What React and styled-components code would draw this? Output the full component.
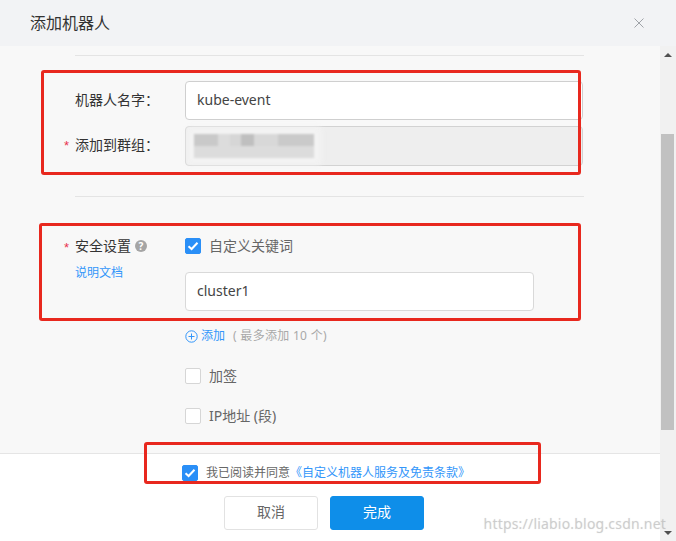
import React from 'react';
import styled, { createGlobalStyle } from 'styled-components';

const CJK = `"Noto Sans", "Noto Sans CJK SC", sans-serif`;

const GlobalStyle = createGlobalStyle`
  html, body {
    margin: 0;
    padding: 0;
    background: #fff;
  }
  * {
    box-sizing: border-box;
  }
`;

const CheckIcon = () => (
  <svg width="12" height="10" viewBox="0 0 12 10" fill="none">
    <path d="M1.5 5.2 L4.6 8 L10.5 1.8" stroke="#fff" strokeWidth="2" />
  </svg>
);

const CheckField = ({ checked, children }) => (
  <CheckRow>
    <CheckBox $checked={checked}>{checked && <CheckIcon />}</CheckBox>
    <CheckLabel>{children}</CheckLabel>
  </CheckRow>
);

const App = () => {
  return (
    <Page>
      <GlobalStyle />
      <Header>
        <Title>添加机器人</Title>
        <CloseButton>
          <svg width="10" height="10" viewBox="0 0 10 10" fill="none">
            <path d="M0.5 0.5 L9.5 9.5 M9.5 0.5 L0.5 9.5" stroke="#a0a3a8" strokeWidth="1" />
          </svg>
        </CloseButton>
      </Header>
      <Main>
        <Column>
          <Body>
            <Divider />
            <NameRow>
              <Label>机器人名字：</Label>
              <Input value="kube-event" readOnly />
            </NameRow>
            <GroupRow>
              <Label $required>添加到群组：</Label>
              <DisabledInput>
                <Blur />
              </DisabledInput>
            </GroupRow>
            <SecondDivider />
            <SecurityRow>
              <LabelColumn>
                <SecurityLabel>
                  <Star>*</Star>安全设置
                  <HelpIcon>?</HelpIcon>
                </SecurityLabel>
                <DocLink>说明文档</DocLink>
              </LabelColumn>
              <Options>
                <CheckField checked>自定义关键词</CheckField>
                <KeywordInput value="cluster1" readOnly />
                <AddRow>
                  <svg width="13" height="13" viewBox="0 0 13 13" fill="none">
                    <circle cx="6.5" cy="6.5" r="5.7" stroke="#3296fa" strokeWidth="1" />
                    <path d="M6.5 3.5 V9.5 M3.5 6.5 H9.5" stroke="#3296fa" strokeWidth="1" />
                  </svg>
                  <AddLink>添加</AddLink>
                  <AddHint>( 最多添加 10 个)</AddHint>
                </AddRow>
                <SignOption>
                  <CheckField>加签</CheckField>
                </SignOption>
                <IpOption>
                  <CheckField>IP地址 (段)</CheckField>
                </IpOption>
              </Options>
            </SecurityRow>
          </Body>
          <Footer>
            <Agreement>
              <CheckBox $checked>
                <CheckIcon />
              </CheckBox>
              <AgreeText>我已阅读并同意</AgreeText>
              <AgreeLink>《自定义机器人服务及免责条款》</AgreeLink>
            </Agreement>
            <Buttons>
              <CancelButton>取消</CancelButton>
              <DoneButton>完成</DoneButton>
            </Buttons>
          </Footer>
        </Column>
        <Scrollbar>
          <Arrow />
          <Track>
            <Thumb />
          </Track>
          <Arrow $down />
        </Scrollbar>
      </Main>
      <Mark $top={70} $left={41} $width={540} $height={105} />
      <Mark $top={223} $left={39} $width={542} $height={98} />
      <Mark $top={442} $left={144} $width={397} $height={42} />
      <Watermark>https://liabio.blog.csdn.net</Watermark>
    </Page>
  );
};

const Page = styled.div`
  position: relative;
  display: flex;
  flex-direction: column;
  width: 676px;
  height: 541px;
  overflow: hidden;
  font-family: ${CJK};
  font-size: 14px;
  line-height: 16px;
  color: #333;
`;

const Header = styled.header`
  display: flex;
  align-items: center;
  justify-content: space-between;
  flex: 0 0 46px;
  padding: 0 32px 0 30px;
  background: #f2f3f5;
`;

const Title = styled.h1`
  margin: 0 0 1px;
  font-size: 16px;
  font-weight: 400;
  color: #333;
`;

const CloseButton = styled.span`
  display: flex;
  margin-bottom: 1px;
`;

const Main = styled.div`
  display: flex;
  flex: 1;
  min-height: 0;
`;

const Column = styled.div`
  display: flex;
  flex-direction: column;
  flex: 1;
  min-width: 0;
`;

const Body = styled.div`
  flex: 0 0 408px;
  padding: 9px 76px 0 75px;
  background: #f8f8f8;
  border-bottom: 1px solid #e5e5e5;
  overflow: hidden;
`;

const Divider = styled.div`
  height: 1px;
  background: #e4e4e4;
`;

const SecondDivider = styled(Divider)`
  margin-top: 30px;
`;

const NameRow = styled.div`
  display: flex;
  align-items: center;
  margin-top: 25px;
`;

const GroupRow = styled(NameRow)`
  margin-top: 6px;
`;

const Label = styled.label`
  position: relative;
  flex: 0 0 110px;
  margin-top: -2px;
  font-size: 14px;
  color: #333;
  ${(p) =>
    p.$required &&
    `
    &::before {
      content: '*';
      position: absolute;
      left: -11px;
      top: 1px;
      font-family: "Liberation Sans", sans-serif;
      font-size: 13px;
      color: #e8324f;
    }
  `}
`;

const Input = styled.input`
  width: 398px;
  height: 39px;
  padding: 0 11px 3px;
  border: 1px solid #cfcfcf;
  border-radius: 4px;
  background: #fff;
  font-family: ${CJK};
  font-size: 14px;
  color: #444;
  outline: none;
`;

const DisabledInput = styled.div`
  width: 398px;
  height: 40px;
  padding: 7px 8px;
  border: 1px solid #d2d2d2;
  border-radius: 4px;
  background: #eeeeee;
`;

const Blur = styled.div`
  width: 120px;
  height: 24px;
  background: linear-gradient(90deg, #c9c9c9 0 20%, #dcdcdc 20% 30%, #d6d6d6 30% 39%, #bfbfbf 39% 50%, #d8d8d8 50% 70%, #cacaca 70% 100%) top / 100% 50% no-repeat,
    #dcdcdc;
  box-shadow: 0 0 5px 7px #f3f3f3;
  filter: blur(0.8px);
`;

const SecurityRow = styled.div`
  display: flex;
  margin-top: 41px;
`;

const LabelColumn = styled.div`
  flex: 0 0 110px;
`;

const SecurityLabel = styled.div`
  position: relative;
  display: flex;
  align-items: center;
  height: 16px;
  font-size: 14px;
  color: #333;
`;

const Star = styled.span`
  position: absolute;
  left: -11px;
  top: 2px;
  font-family: "Liberation Sans", sans-serif;
  font-size: 13px;
  color: #e8324f;
`;

const HelpIcon = styled.span`
  display: flex;
  align-items: center;
  justify-content: center;
  width: 12px;
  height: 12px;
  margin-left: 4px;
  border-radius: 50%;
  background: #a5a5a5;
  font-size: 10px;
  font-weight: 700;
  color: #fff;
`;

const DocLink = styled.a`
  display: block;
  margin-top: 11px;
  font-size: 12px;
  color: #3296fa;
`;

const Options = styled.div`
  display: flex;
  flex-direction: column;
  align-items: flex-start;
`;

const CheckRow = styled.div`
  display: flex;
  align-items: center;
  gap: 8px;
`;

const CheckBox = styled.span`
  display: flex;
  align-items: center;
  justify-content: center;
  flex: 0 0 16px;
  width: 16px;
  height: 16px;
  border: 1px solid ${(p) => (p.$checked ? '#2a8ff7' : '#d6d6d6')};
  border-radius: 2px;
  background: ${(p) => (p.$checked ? '#2a8ff7' : '#fff')};
`;

const CheckLabel = styled.span`
  font-size: 14px;
  color: #666;
`;

const KeywordInput = styled(Input)`
  width: 349px;
  margin-top: 18px;
  border-color: #d9d9d9;
`;

const AddRow = styled.div`
  display: flex;
  align-items: center;
  gap: 3px;
  margin-top: 18px;
  height: 14px;
`;

const AddLink = styled.a`
  font-size: 12px;
  color: #3296fa;
`;

const AddHint = styled.span`
  margin-left: 5px;
  font-size: 12px;
  letter-spacing: 0.3px;
  color: #a8a8a8;
`;

const SignOption = styled.div`
  margin-top: 25px;
`;

const IpOption = styled.div`
  margin-top: 24px;
`;

const Footer = styled.footer`
  display: flex;
  flex-direction: column;
  align-items: flex-start;
  flex: 1;
  padding: 11px 0 0 182px;
  background: #fff;
`;

const Agreement = styled.div`
  display: flex;
  align-items: center;
  font-size: 12px;
`;

const AgreeText = styled.span`
  margin-left: 8px;
  color: #666;
`;

const AgreeLink = styled.a`
  color: #3296fa;
`;

const Buttons = styled.div`
  display: flex;
  gap: 12px;
  margin: 15px 0 0 42px;
`;

const CancelButton = styled.button`
  width: 94px;
  height: 34px;
  padding: 0 0 5px;
  border: 1px solid #e2e2e2;
  border-radius: 3px;
  background: #fff;
  font-family: ${CJK};
  font-size: 14px;
  color: #666;
`;

const DoneButton = styled(CancelButton)`
  border-color: #0e8ee9;
  background: #0e8ee9;
  color: #fff;
`;

const Scrollbar = styled.div`
  display: flex;
  flex-direction: column;
  flex: 0 0 16px;
  background: #f1f1f1;
`;

const Arrow = styled.div`
  flex: 0 0 17px;
  display: flex;
  align-items: center;
  justify-content: center;
  &::after {
    content: '';
    border-left: 4px solid transparent;
    border-right: 4px solid transparent;
    ${(p) => (p.$down ? 'border-top: 4px solid #505050;' : 'border-bottom: 4px solid #505050;')}
  }
`;

const Track = styled.div`
  flex: 1;
  padding: 71px 2px 0 1px;
`;

const Thumb = styled.div`
  height: 296px;
  background: #c1c1c1;
`;

const Mark = styled.div`
  position: absolute;
  top: ${(p) => p.$top}px;
  left: ${(p) => p.$left}px;
  width: ${(p) => p.$width}px;
  height: ${(p) => p.$height}px;
  border: 3px solid #e8281e;
  border-radius: 3px;
`;

const Watermark = styled.span`
  position: absolute;
  right: 10px;
  bottom: 9px;
  font-size: 14px;
  letter-spacing: 0.2px;
  color: rgba(170, 170, 170, 0.4);
  text-shadow: 0 0 1px rgba(170, 170, 170, 0.4);
`;

export default App;
